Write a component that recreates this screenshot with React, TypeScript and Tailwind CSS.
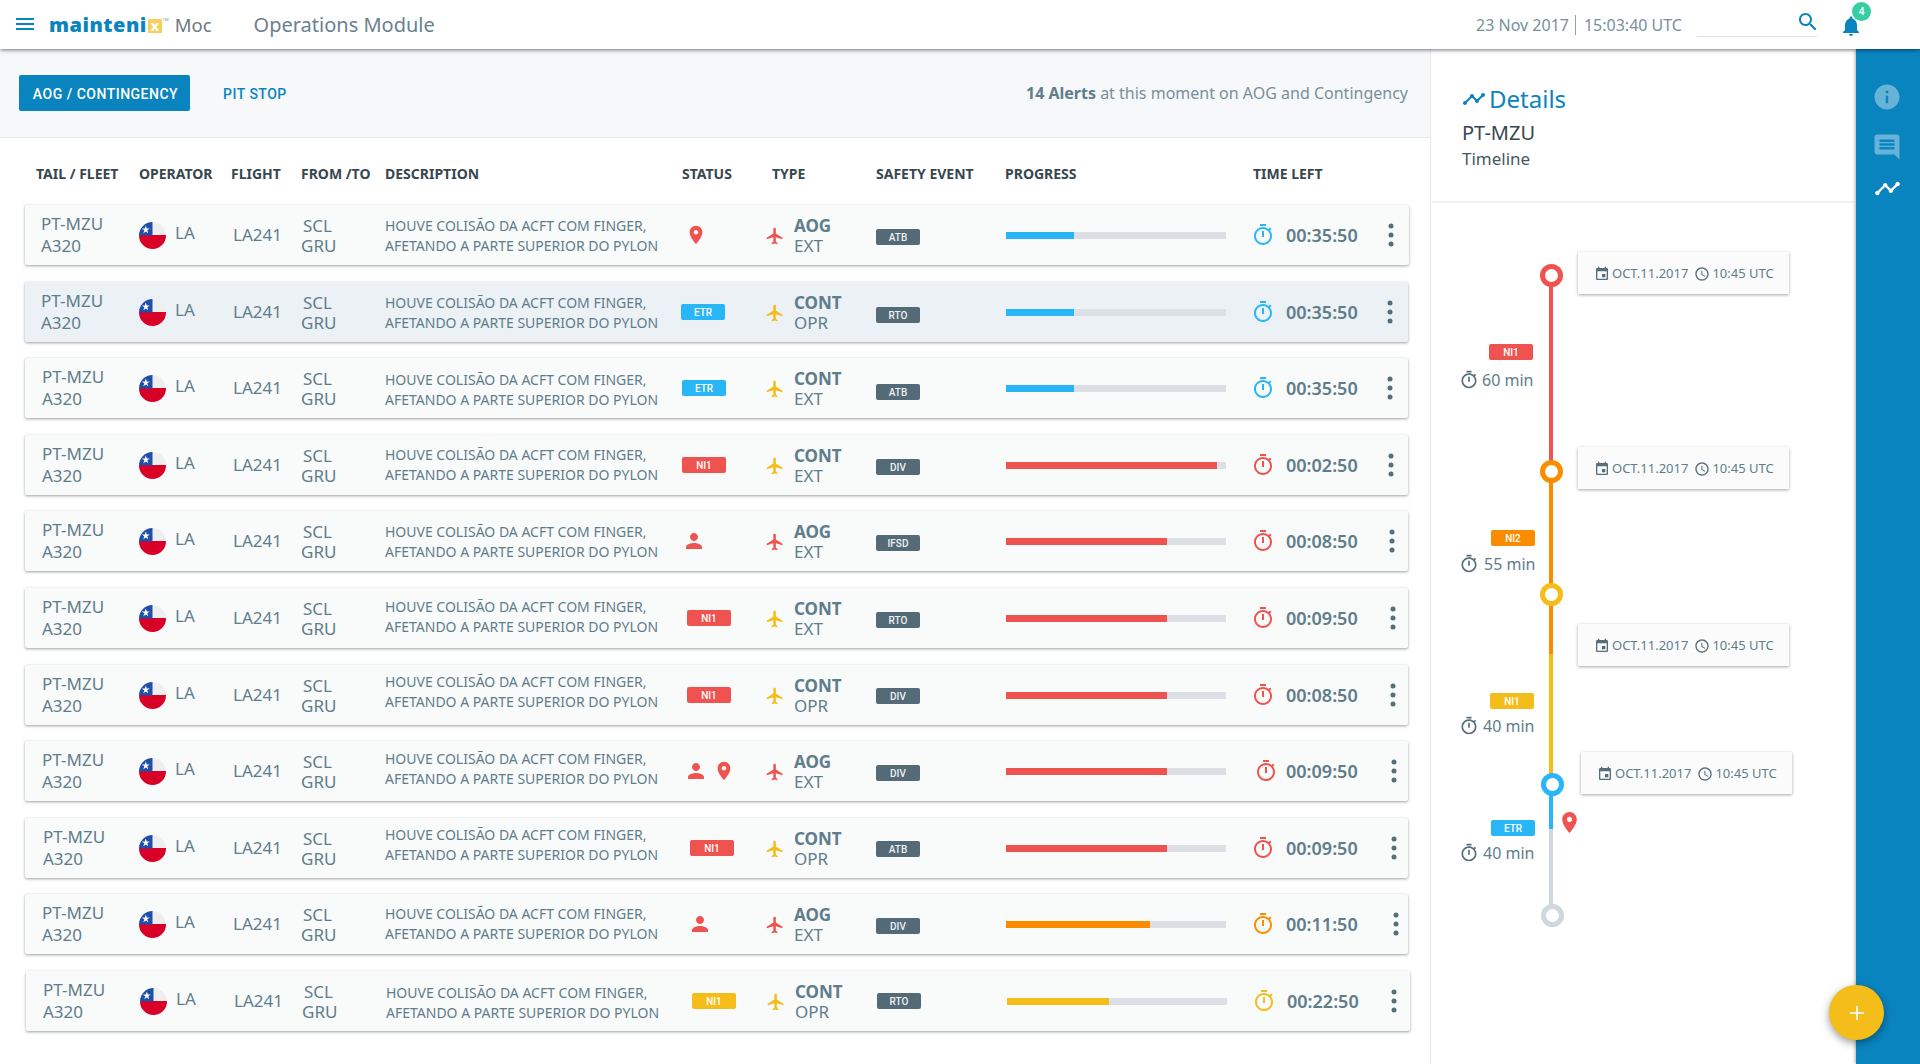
import React from "react";

const P = {
  timer: "M15 1H9v2h6V1zm-4 13h2V8h-2v6zm8.03-6.61l1.42-1.42c-.43-.51-.9-.99-1.41-1.41l-1.42 1.42C16.07 4.74 14.12 4 12 4c-4.97 0-9 4.03-9 9s4.02 9 9 9 9-4.03 9-9c0-2.12-.74-4.07-1.97-5.61zM12 20c-3.87 0-7-3.13-7-7s3.13-7 7-7 7 3.13 7 7-3.13 7-7 7z",
  plane: "M21 16v-2l-8-5V3.5c0-.83-.67-1.5-1.5-1.5S10 2.67 10 3.5V9l-8 5v2l8-2.5V19l-2 1.5V22l3.5-1 3.5 1v-1.5L13 19v-5.5l8 2.5z",
  pin: "M12 2C8.13 2 5 5.13 5 9c0 5.25 7 13 7 13s7-7.75 7-13c0-3.87-3.13-7-7-7zm0 9.5c-1.38 0-2.5-1.12-2.5-2.5s1.12-2.5 2.5-2.5 2.5 1.12 2.5 2.5-1.12 2.5-2.5 2.5z",
  person: "M12 12c2.21 0 4-1.79 4-4s-1.79-4-4-4-4 1.79-4 4 1.79 4 4 4zm0 2c-2.67 0-8 1.34-8 4v2h16v-2c0-2.66-5.33-4-8-4z",
  event: "M17 12h-5v5h5v-5zM16 1v2H8V1H6v2H5c-1.11 0-1.99.9-1.99 2L3 19c0 1.1.89 2 2 2h14c1.1 0 2-.9 2-2V5c0-1.1-.9-2-2-2h-1V1h-2zm3 18H5V8h14v11z",
  clock: "M11.99 2C6.47 2 2 6.48 2 12s4.47 10 9.99 10C17.52 22 22 17.52 22 12S17.52 2 11.99 2zM12 20c-4.42 0-8-3.58-8-8s3.58-8 8-8 8 3.58 8 8-3.58 8-8 8zm.5-13H11v6l5.25 3.15.75-1.23-4.5-2.67z",
  timeline: "M23 8c0 1.1-.9 2-2 2-.18 0-.35-.02-.51-.07l-3.56 3.55c.05.16.07.34.07.52 0 1.1-.9 2-2 2s-2-.9-2-2c0-.18.02-.36.07-.52l-2.55-2.55c-.16.05-.34.07-.52.07s-.36-.02-.52-.07l-4.55 4.56c.05.16.07.33.07.51 0 1.1-.9 2-2 2s-2-.9-2-2 .9-2 2-2c.18 0 .35.02.51.07l4.56-4.55C8.02 9.36 8 9.18 8 9c0-1.1.9-2 2-2s2 .9 2 2c0 .18-.02.36-.07.52l2.55 2.55c.16-.05.34-.07.52-.07s.36.02.52.07l3.55-3.56C19.02 8.35 19 8.18 19 8c0-1.1.9-2 2-2s2 .9 2 2z",
  info: "M12 2C6.48 2 2 6.48 2 12s4.48 10 10 10 10-4.48 10-10S17.52 2 12 2zm1 15h-2v-6h2v6zm0-8h-2V7h2v2z",
  comment: "M21.99 4c0-1.1-.89-2-1.99-2H4c-1.1 0-2 .9-2 2v12c0 1.1.9 2 2 2h14l4 4-.01-18zM18 14H6v-2h12v2zm0-3H6V9h12v2zm0-3H6V6h12v2z",
  bell: "M12 22c1.1 0 2-.9 2-2h-4c0 1.1.89 2 2 2zm6-6v-5c0-3.07-1.64-5.64-4.5-6.32V4c0-.83-.67-1.5-1.5-1.5s-1.5.67-1.5 1.5v.68C7.63 5.36 6 7.92 6 11v5l-2 2v1h16v-1l-2-2z",
  search: "M15.5 14h-.79l-.28-.27C15.41 12.59 16 11.11 16 9.5 16 5.91 13.09 3 9.5 3S3 5.91 3 9.5 5.91 16 9.5 16c1.61 0 3.09-.59 4.23-1.57l.27.28v.79l5 4.99L20.49 19l-4.99-5zm-6 0C7.01 14 5 11.99 5 9.5S7.01 5 9.5 5 14 7.01 14 9.5 11.99 14 9.5 14z",
};

const RED = "#ef5350";
const ORANGE = "#fb8c00";
const YELLOW = "#f4bd19";
const BLUE = "#29b6f6";
const SLATE = "#546e7a";

function Ic({ d, size, color, className }: { d: string; size: number; color: string; className?: string }) {
  return (
    <svg width={size} height={size} viewBox="0 0 24 24" fill={color} className={className}>
      <path d={d} />
    </svg>
  );
}

function Flag() {
  return (
    <svg width="27" height="27" viewBox="0 0 27 27" className="shrink-0">
      <defs>
        <clipPath id="flagclip">
          <circle cx="13.5" cy="13.5" r="13.5" />
        </clipPath>
      </defs>
      <g clipPath="url(#flagclip)">
        <rect width="27" height="13.5" fill="#eeeeee" />
        <rect y="13" width="27" height="14" fill="#d80027" />
        <rect width="13.5" height="13.5" fill="#1f4fa8" />
        <path d="M6.8 3.6l1 2.9h3l-2.5 1.8.9 2.9-2.4-1.8-2.5 1.8 1-2.9-2.5-1.8h3z" fill="#fff" />
      </g>
    </svg>
  );
}

function Badge({ text, color, className }: { text: string; color: string; className?: string }) {
  return (
    <div
      className={"w-11 h-4 rounded-[2px] flex items-center justify-center text-white text-[10px] font-medium font-['Roboto',sans-serif] " + (className ?? "")}
      style={{ backgroundColor: color }}
    >
      {text}
    </div>
  );
}

type Row = {
  mt: number; left: number; w: number; bg?: boolean; tx: number; ey: number; dy: number;
  status: string; so: number; scolor?: string; type: "AOG" | "CONT"; sub: string; ev: string;
  pct: number; color: string; time: string; to: number; kx: number;
};

const rows: Row[] = [
  { mt: 0, left: 25, w: 1384, tx: 0, ey: 2, dy: 1, status: "pin", so: 3, type: "AOG", sub: "EXT", ev: "ATB", pct: 31, color: BLUE, time: "00:35:50", to: 0, kx: 1391 },
  { mt: 17, left: 25, w: 1383, bg: true, tx: 0, ey: 3, dy: 1, status: "ETR", so: -1, scolor: BLUE, type: "CONT", sub: "OPR", ev: "RTO", pct: 31, color: BLUE, time: "00:35:50", to: 0, kx: 1390 },
  { mt: 16, left: 25, w: 1383, tx: 1, ey: 4, dy: 2, status: "ETR", so: 0, scolor: BLUE, type: "CONT", sub: "EXT", ev: "ATB", pct: 31, color: BLUE, time: "00:35:50", to: 0, kx: 1390 },
  { mt: 17, left: 25, w: 1383, tx: 1, ey: 2, dy: 0, status: "NI1", so: 0, scolor: RED, type: "CONT", sub: "EXT", ev: "DIV", pct: 96, color: RED, time: "00:02:50", to: 0, kx: 1391 },
  { mt: 16, left: 25, w: 1383, tx: 1, ey: 2, dy: 1, status: "person", so: 0, type: "AOG", sub: "EXT", ev: "IFSD", pct: 73, color: RED, time: "00:08:50", to: 0, kx: 1392 },
  { mt: 17, left: 25, w: 1383, tx: 1, ey: 2, dy: -1, status: "NI1", so: 5, scolor: RED, type: "CONT", sub: "EXT", ev: "RTO", pct: 73, color: RED, time: "00:09:50", to: 0, kx: 1393 },
  { mt: 17, left: 25, w: 1383, tx: 1, ey: 1, dy: -3, status: "NI1", so: 5, scolor: RED, type: "CONT", sub: "OPR", ev: "DIV", pct: 73, color: RED, time: "00:08:50", to: 0, kx: 1393 },
  { mt: 16, left: 25, w: 1383, tx: 1, ey: 2, dy: -2, status: "both", so: 2, type: "AOG", sub: "EXT", ev: "DIV", pct: 73, color: RED, time: "00:09:50", to: 3, kx: 1394 },
  { mt: 17, left: 25, w: 1383, tx: 2, ey: 1, dy: -3, status: "NI1", so: 8, scolor: RED, type: "CONT", sub: "OPR", ev: "ATB", pct: 73, color: RED, time: "00:09:50", to: 0, kx: 1394 },
  { mt: 16, left: 25, w: 1383, tx: 1, ey: 2, dy: 0, status: "person", so: 6, type: "AOG", sub: "EXT", ev: "DIV", pct: 65.5, color: ORANGE, time: "00:11:50", to: 0, kx: 1396 },
  { mt: 17, left: 26, w: 1384, tx: 1, ey: 0, dy: 2, status: "NI1", so: 9, scolor: YELLOW, type: "CONT", sub: "OPR", ev: "RTO", pct: 46.5, color: YELLOW, time: "00:22:50", to: 0, kx: 1394 },
];

function AlertRow({ r }: { r: Row }) {
  const kebabMargin = r.kx - 3 - (r.left === 26 ? 1359 : 1358);
  return (
    <div
      className={"h-[60px] flex items-center rounded-[2px] pl-4 shadow-[0_1px_3px_rgba(0,0,0,0.38)] text-[#607d8b] " + (r.bg ? "bg-[#ebf1f5]" : "bg-[#f9fafa]")}
      style={{ marginTop: r.mt, marginLeft: r.left, width: r.w }}
    >
      <div className="w-[98px] text-[17px] leading-[22px]" style={{ paddingLeft: r.tx }}>
        <div>PT-MZU</div>
        <div>A320</div>
      </div>
      <div className="w-[94px] flex items-center">
        <Flag />
        <span className="text-[17px] ml-[9px] -mt-[5px]">LA</span>
      </div>
      <div className="w-[68px] text-[17px]">LA241</div>
      <div className="w-[84px] text-[17px] leading-[20px] mt-[1px]">
        <div className="pl-[2px]">SCL</div>
        <div>GRU</div>
      </div>
      <div
        className="w-[297px] text-sm leading-5 whitespace-nowrap"
        style={r.dy >= 0 ? { paddingTop: r.dy * 2 } : { paddingBottom: -r.dy * 2 }}
      >
        <div>HOUVE COLISÃO DA ACFT COM FINGER,</div>
        <div>AFETANDO A PARTE SUPERIOR DO PYLON</div>
      </div>
      <div className="w-[85px] flex items-center" style={{ paddingLeft: Math.max(r.so, 0), marginLeft: Math.min(r.so, 0) }}>
        {r.status === "pin" && <Ic d={P.pin} size={22} color={RED} />}
        {r.status === "person" && <Ic d={P.person} size={24} color={RED} />}
        {r.status === "both" && (
          <>
            <Ic d={P.person} size={24} color={RED} />
            <Ic d={P.pin} size={22} color={RED} className="ml-[5px]" />
          </>
        )}
        {(r.status === "ETR" || r.status === "NI1") && <Badge text={r.status} color={r.scolor!} />}
      </div>
      <div className="w-[109px] flex items-center" style={{ marginLeft: r.so < 0 ? -r.so : 0 }}>
        <Ic d={P.plane} size={20} color={r.type === "AOG" ? RED : YELLOW} className="-ml-[2px] mt-[2px] shrink-0" />
        <div className="ml-[9px] leading-5 mt-[1px]">
          <div className="text-[17px] font-bold">{r.type}</div>
          <div className="text-[17px]">{r.sub}</div>
        </div>
      </div>
      <div className="w-[130px]">
        <div
          className="w-11 h-4 rounded-[2px] bg-[#546a76] text-[#eef2f4] text-[10px] font-medium font-['Roboto',sans-serif] flex items-center justify-center"
          style={{ marginTop: r.ey * 2 }}
        >
          {r.ev}
        </div>
      </div>
      <div className="w-[248px]">
        <div className="w-[220px] h-[7px] bg-[#dce0e4]">
          <div className="h-full" style={{ width: `${r.pct}%`, backgroundColor: r.color }} />
        </div>
      </div>
      <div className="w-[35px] -ml-[3px] shrink-0" style={{ paddingLeft: r.to }}>
        <Ic d={P.timer} size={24} color={r.color} />
      </div>
      <div className="w-[72px] text-[18px] font-semibold whitespace-nowrap">{r.time}</div>
      <svg width="6" height="24" viewBox="0 0 6 24" fill={SLATE} className="shrink-0" style={{ marginLeft: kebabMargin }}>
        <circle cx="3" cy="3" r="2.5" />
        <circle cx="3" cy="12" r="2.5" />
        <circle cx="3" cy="21" r="2.5" />
      </svg>
    </div>
  );
}

function TimeCard({ x, y }: { x: number; y: number }) {
  return (
    <div
      className="absolute w-[211px] h-[42px] bg-[#fbfbfb] shadow-[0_1px_3px_rgba(0,0,0,0.35)] flex items-center pl-4 pt-[2px] text-[13px] text-[#607d8b] whitespace-nowrap"
      style={{ left: x, top: y }}
    >
      <Ic d={P.event} size={16} color={SLATE} />
      <span className="ml-[2px]">OCT.11.2017</span>
      <Ic d={P.clock} size={16} color={SLATE} className="ml-[6px]" />
      <span className="ml-[2px]">10:45 UTC</span>
    </div>
  );
}

function Node({ x, y, color }: { x: number; y: number; color: string }) {
  return (
    <div
      className="absolute w-[23px] h-[23px] rounded-full bg-white border-[5px]"
      style={{ left: x - 11.5, top: y - 11.5, borderColor: color }}
    />
  );
}

function Segment({ y1, y2, color }: { y1: number; y2: number; color: string }) {
  return <div className="absolute w-1 left-[1549px]" style={{ top: y1, height: y2 - y1, backgroundColor: color }} />;
}

function Duration({ y, label, tx }: { y: number; label: string; tx: number }) {
  return (
    <div className="absolute flex items-center h-5 left-[1459px] text-base text-[#607d8b] whitespace-nowrap" style={{ top: y - 11 }}>
      <Ic d={P.timer} size={20} color={SLATE} />
      <span className="absolute" style={{ left: tx }}>{label}</span>
    </div>
  );
}

export default function App() {
  return (
    <div className="relative w-[1920px] h-[1064px] overflow-hidden bg-white font-['Noto_Sans','Open_Sans',sans-serif] text-[#607d8b]">
      <header className="relative z-20 h-[49px] bg-white shadow-[0_1px_4px_rgba(0,0,0,0.55)] flex items-center">
        <svg width="18" height="13" viewBox="0 0 18 13" fill="#0a84bf" className="ml-4">
          <rect width="18" height="2" />
          <rect y="5" width="18" height="2" />
          <rect y="10" width="18" height="2" />
        </svg>
        <div className="ml-[15px] flex items-center">
          <span className="text-[20px] font-extrabold leading-none text-[#0a84bf] tracking-[0.5px] font-['Open_Sans',sans-serif]">mainteni</span>
          <span className="ml-[1px] w-[14px] h-[14px] mt-[3px] bg-[#f7cf5c] text-white text-[15px] font-bold leading-[13px] text-center">x</span>
          <span className="text-[4px] self-start mt-[2px] ml-[1px] text-[#78909c]">TM</span>
        </div>
        <span className="ml-[6px] text-[18.5px] text-[#6d7880]">Moc</span>
        <span className="ml-[42px] text-[20px] text-[#6b8090] mt-[1px]">Operations Module</span>
        <div className="ml-auto flex items-center text-base text-[#78909c]">
          <span>23 Nov 2017</span>
          <span className="mr-[8px] ml-[6px] w-px h-5 bg-[#90a4ae]" />
          <span>15:03:40 UTC</span>
          <div className="ml-[15px] w-[120px] h-[25px] border-b border-[#dde2e5] relative">
            <Ic d={P.search} size={24} color="#0a84bf" className="absolute -right-[3px] -top-[2px]" />
          </div>
          <div className="relative ml-[22px] mr-[57px] w-6 h-6 mt-[2px]">
            <Ic d={P.bell} size={24} color="#0a84bf" />
            <div className="absolute -top-[12px] left-[13px] w-[19px] h-[19px] rounded-full bg-[#34cfa3] text-white text-[10px] font-semibold flex items-center justify-center">
              4
            </div>
          </div>
        </div>
      </header>

      <div className="flex h-[1015px]">
        <main className="w-[1430px] shrink-0">
          <div className="h-[89px] bg-[#f7f8fa] border-b border-[#e4e7e9] flex items-center pl-[19px] pb-[1px]">
            <button className="w-[171px] h-9 pt-[2px] pl-[2px] rounded-[2px] bg-[#0a84bf] text-white text-sm font-medium tracking-[0.5px] font-['Roboto',sans-serif]">
              AOG / CONTINGENCY
            </button>
            <button className="ml-[33px] pt-[2px] text-[#0a84bf] text-sm font-medium tracking-[0.5px] font-['Roboto',sans-serif]">PIT STOP</button>
            <div className="ml-auto mr-[22px] text-base text-[#78909c]">
              <span className="font-bold text-[#607d8b]">14 Alerts</span> at this moment on AOG and Contingency
            </div>
          </div>
          <div className="h-[67px] flex items-center pl-9 pt-1 text-sm font-bold text-[#37474f] whitespace-nowrap">
            <div className="w-[103px]">TAIL / FLEET</div>
            <div className="w-[92px]">OPERATOR</div>
            <div className="w-[70px]">FLIGHT</div>
            <div className="w-[84px]">FROM /TO</div>
            <div className="w-[297px]">DESCRIPTION</div>
            <div className="w-[90px]">STATUS</div>
            <div className="w-[104px]">TYPE</div>
            <div className="w-[129px]">SAFETY EVENT</div>
            <div className="w-[248px]">PROGRESS</div>
            <div>TIME LEFT</div>
          </div>
          <div className="flex flex-col">
            {rows.map((r, i) => (
              <AlertRow key={i} r={r} />
            ))}
          </div>
        </main>

        <aside className="w-[426px] shrink-0 border-l border-[#e8eaec]">
          <div className="h-[154px] mx-px border-b-2 border-[#f1f2f3] pl-[30px] pt-[33px]">
            <div className="flex items-center h-[34px]">
              <Ic d={P.timeline} size={24} color="#0a84bf" />
              <span className="ml-[3px] text-2xl text-[#0a84bf]">Details</span>
            </div>
            <div className="mt-[3px] text-[20px] leading-7 text-[#37474f]">PT-MZU</div>
            <div className="text-[17px] leading-6 text-[#455a64]">Timeline</div>
          </div>
        </aside>

        <nav className="w-[64px] shrink-0 bg-[#0a84bf] shadow-[-1px_0_3px_rgba(0,0,0,0.3)] flex flex-col items-center pt-[33px] pr-[2px] relative z-10">
          <Ic d={P.info} size={30} color="rgba(255,255,255,0.38)" />
          <Ic d={P.comment} size={30} color="rgba(255,255,255,0.38)" className="mt-[20px]" />
          <Ic d={P.timeline} size={27} color="#ffffff" className="mt-[13px]" />
        </nav>
      </div>

      {/* timeline diagram */}
      <Segment y1={275} y2={471} color={RED} />
      <Segment y1={471} y2={654} color={ORANGE} />
      <Segment y1={654} y2={784} color={YELLOW} />
      <Segment y1={784} y2={829} color={BLUE} />
      <Segment y1={829} y2={915} color="#cfd8dc" />
      <Node x={1551} y={275} color={RED} />
      <Node x={1551} y={471} color={ORANGE} />
      <Node x={1551} y={594} color={YELLOW} />
      <Node x={1552} y={784} color={BLUE} />
      <Node x={1552} y={915} color="#cfd8dc" />
      <TimeCard x={1578} y={252} />
      <TimeCard x={1578} y={447} />
      <TimeCard x={1578} y={624} />
      <TimeCard x={1581} y={752} />
      <Badge text="NI1" color={RED} className="absolute left-[1489px] top-[344px]" />
      <Badge text="NI2" color={ORANGE} className="absolute left-[1491px] top-[530px]" />
      <Badge text="NI1" color={YELLOW} className="absolute left-[1490px] top-[693px]" />
      <Badge text="ETR" color={BLUE} className="absolute left-[1491px] top-[820px]" />
      <Duration y={381} label="60 min" tx={23} />
      <Duration y={565} label="55 min" tx={25} />
      <Duration y={727} label="40 min" tx={24} />
      <Duration y={854} label="40 min" tx={24} />
      <Ic d={P.pin} size={25} color={RED} className="absolute left-[1557px] top-[810px]" />

      <button className="absolute z-20 left-[1829px] top-[985px] w-[55px] h-[55px] rounded-full bg-[#f4bd19] shadow-[0_3px_8px_rgba(0,0,0,0.4)] flex items-center justify-center">
        <svg width="14" height="14" viewBox="0 0 14 14" fill="#fff">
          <rect x="6.2" width="1.6" height="14" />
          <rect y="6.2" width="14" height="1.6" />
        </svg>
      </button>
    </div>
  );
}
